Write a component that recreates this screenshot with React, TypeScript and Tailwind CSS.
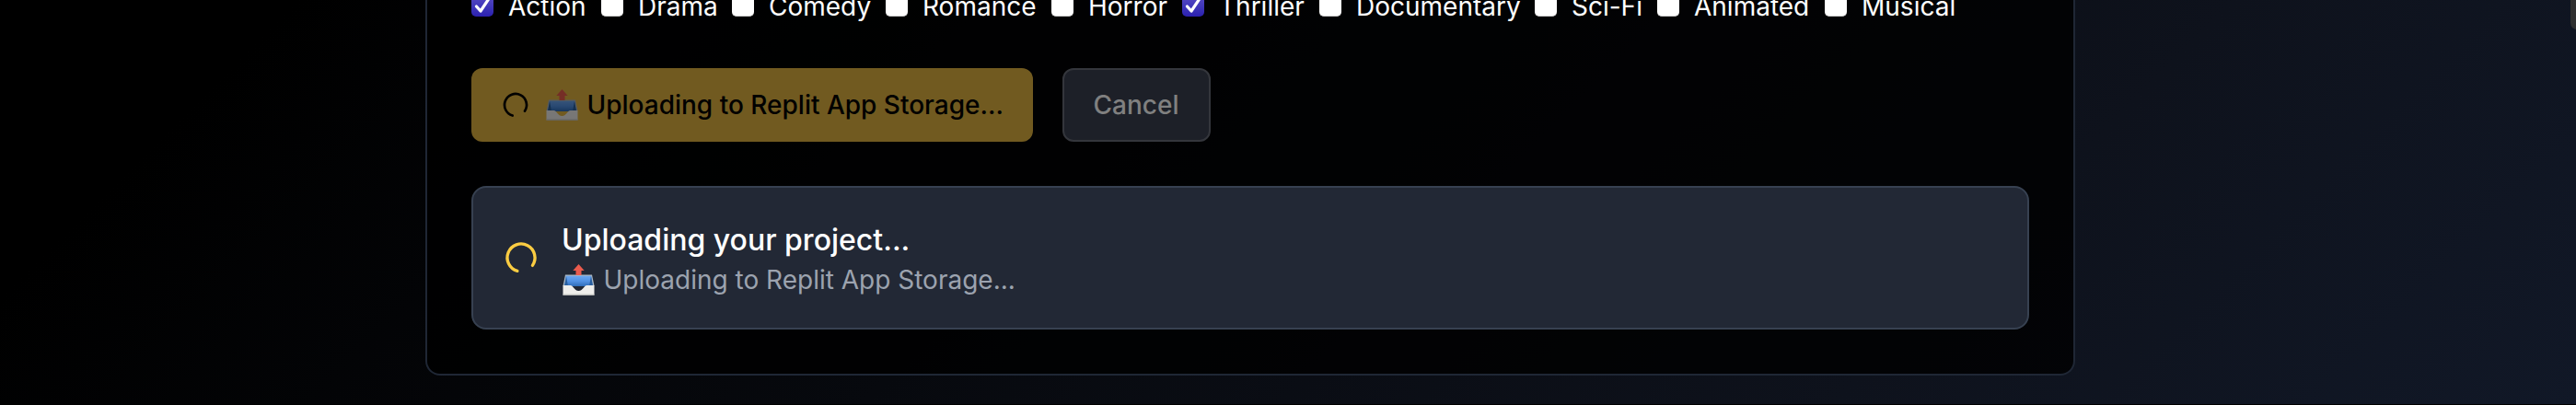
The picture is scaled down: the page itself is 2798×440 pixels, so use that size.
import React from "react";

const genres = [
  { name: "Action", checked: true, w: "w-[141px]" },
  { name: "Drama", w: "w-[142px]" },
  { name: "Comedy", w: "w-[167px]" },
  { name: "Romance", w: "w-[180px]" },
  { name: "Horror", w: "w-[142px]" },
  { name: "Thriller", checked: true, w: "w-[149px]" },
  { name: "Documentary", w: "w-[234px]" },
  { name: "Sci-Fi", w: "w-[133px]" },
  { name: "Animated", w: "w-[182px]" },
  { name: "Musical", w: "w-[145px]" },
];

function Check({ checked }: { checked?: boolean }) {
  return (
    <span
      className={
        checked
          ? "flex size-6 items-center justify-center rounded-[5px] bg-linear-to-b from-[#5b4cc4] to-[#2b1fb0]"
          : "block size-6 rounded-[5px] border-b border-[#c8c8c8] bg-white"
      }
    >
      {checked && (
        <svg viewBox="0 0 24 24" className="size-6" fill="none" stroke="white" strokeWidth="3.2" strokeLinecap="round" strokeLinejoin="round">
          <path d="M5.5 13 L10 18 L18.300 5.600" />
        </svg>
      )}
    </span>
  );
}

function Loader({ className }: { className: string }) {
  return (
    <svg viewBox="0 0 24 24" fill="none" stroke="currentColor" strokeWidth="2" strokeLinecap="round" className={className}>
      <path d="M21 12a9 9 0 1 1-6.219-8.56" transform="rotate(106 12 12)" />
    </svg>
  );
}

function Outbox({ className }: { className?: string }) {
  return (
    <svg viewBox="0 0 36 36" className={`size-9 shrink-0 ${className ?? ""}`}>
      <defs>
        <linearGradient id="tray" x1="0" y1="0" x2="0" y2="1">
          <stop offset="0" stopColor="#6ba6f0" />
          <stop offset="0.5" stopColor="#5292e4" />
          <stop offset="1" stopColor="#2f6cb8" />
        </linearGradient>
      </defs>
      <path d="M4 12.500h29l2.500 12H1.500z" fill="#a9b6c2" />
      <path d="M5 13.800h27l2 11.200H3z" fill="url(#tray)" />
      <path d="M5 13.800L3 25h4zM32 13.800L34 25h-4z" fill="#2a5f9e" />
      <path d="M1.500 24h8c3.500 0 4 6 9 6s5.500-6 9-6h8v10.500h-34z" fill="#efeeeb" />
      <path d="M1.500 33.500h34v1.200h-34z" fill="#c9c9c6" />
      <path d="M18.500 1l6.200 7H21.500v5h-6V8h-3.200z" fill="#ea5b4d" />
    </svg>
  );
}

export default function App() {
  return (
    <div className="relative flex h-[440px] w-[2798px] flex-col overflow-hidden border-b border-black bg-linear-[135deg,#000000_10%,#0e121c_75%,#111827_100%] font-['Inter',sans-serif] text-[28px] leading-10">
      <div className="ml-[462px] flex h-[408px] w-[1792px] flex-col rounded-b-2xl border-2 border-t-0 border-[#1f2735] bg-black/80 px-12">
        <div className="-mt-[14px] flex h-10 items-center text-white">
          {genres.map((g) => (
            <label key={g.name} className={`flex shrink-0 items-center gap-4 ${g.w}`}>
              <Check checked={g.checked} />
              <span className="pt-0.5">{g.name}</span>
            </label>
          ))}
        </div>
        <div className="mt-12 flex h-20 gap-8 font-medium">
          <button className="flex w-[610px] items-center rounded-xl bg-[#715a20] px-8 text-black">
            <Loader className="mr-4 size-8" />
            <span className="flex items-center gap-[9.5px] whitespace-nowrap">
              <Outbox className="brightness-50" />
              Uploading to Replit App Storage...
            </span>
          </button>
          <button className="w-[161px] rounded-xl border-2 border-[#34363c] bg-[#1d2028] pr-px text-[#808080]">Cancel</button>
        </div>
        <div className="mt-12 flex h-[156px] items-center gap-6 rounded-2xl border-2 border-[#374151] bg-[#222835] px-8">
          <Loader className="size-10 text-[#facc42]" />
          <div>
            <p className="h-12 pt-px text-[32px] leading-12 font-medium text-white">Uploading your project...</p>
            <p className="flex items-center gap-[9.5px] text-[#9ca3af]">
              <Outbox />
              Uploading to Replit App Storage...
            </p>
          </div>
        </div>
      </div>
      <div className="absolute -top-10 -right-2 h-[72px] w-3.5 rounded-full bg-[#2f2f30]" />
    </div>
  );
}
